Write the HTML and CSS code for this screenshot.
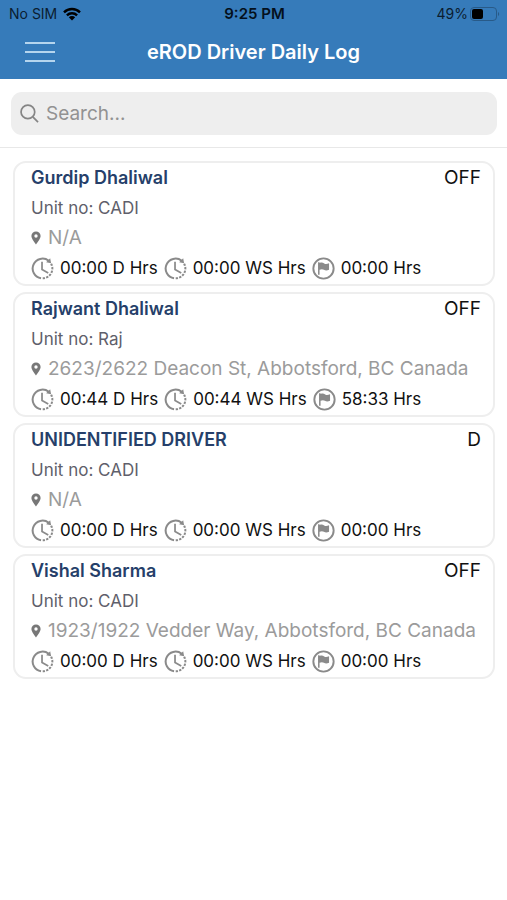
FILE: index.html
```html
<!DOCTYPE html>
<html lang="en">
<head>
<meta charset="utf-8">
<meta name="viewport" content="width=device-width, initial-scale=1">
<title>eROD Driver Daily Log</title>
<link rel="stylesheet" href="styles.css">
</head>
<body>
<svg class="sprite" aria-hidden="true">
  <symbol id="pin" viewBox="0 0 10 14">
    <path fill="currentColor" fill-rule="evenodd" d="M5 .5A4.600 4.600 0 0 0 .4 5.100C.4 8.200 5 13.500 5 13.500S9.600 8.200 9.600 5.100A4.600 4.600 0 0 0 5 .5ZM5 3.300A1.700 1.700 0 1 1 5 6.700A1.700 1.700 0 0 1 5 3.300Z"/>
  </symbol>
  <symbol id="clock" viewBox="0 0 24 24">
    <g fill="none" stroke="currentColor">
      <path stroke-width="2.100" d="M10.500 22.200A10.300 10.300 0 1 1 18.500 4"/>
      <path stroke-width="2.100" stroke-dasharray="2.400 1.300" d="M21 7A10.300 10.300 0 0 1 12 22.300"/>
      <path stroke-width="1.800" d="M11.500 5V13L18 16.800"/>
    </g>
    <path fill="currentColor" d="M20 1.200L21 6.600L15.800 5.600Z"/>
  </symbol>
  <symbol id="flag" viewBox="0 0 24 24">
    <circle cx="12" cy="12" r="10.600" fill="none" stroke="currentColor" stroke-width="2"/>
    <path fill="currentColor" d="M6.300 5.600H7.900V6.300C10 5.400 11.500 5.900 12.700 6.700C14.200 7.500 15.500 7.400 17.800 6.500V13.300C15.500 14.300 13.800 14.100 12.500 13.400C11 12.600 9.800 12.600 7.900 13.400V18.400H6.300Z"/>
  </symbol>
</svg>

<header class="topbar">
  <div class="status">
    <div class="status-left">
      <span>No SIM</span>
      <svg class="wifi" viewBox="0 0 18 14" aria-hidden="true">
        <g fill="none" stroke="currentColor" stroke-width="2.400">
          <path d="M1 5.300A11.500 11.500 0 0 1 17 5.300"/>
          <path d="M3.900 8.300A7.300 7.300 0 0 1 14.100 8.300"/>
        </g>
        <path fill="currentColor" d="M9 13.600L5.800 10.300A4.600 4.600 0 0 1 12.200 10.300Z"/>
      </svg>
    </div>
    <span class="time">9:25 PM</span>
    <div class="status-right">
      <span>49%</span>
      <svg class="battery" viewBox="0 0 30 14" aria-hidden="true">
        <rect x=".5" y=".5" width="26" height="13" rx="3.500" fill="none" stroke="#285a88"/>
        <rect x="2" y="2" width="11" height="10" rx="2" fill="#000"/>
        <path d="M28 5A2.300 2.300 0 0 1 28 9Z" fill="#285a88"/>
      </svg>
    </div>
  </div>
  <div class="navbar">
    <button class="menu" type="button" aria-label="Menu"><span></span><span></span><span></span></button>
    <h1>eROD Driver Daily Log</h1>
  </div>
</header>

<form class="search" role="search">
  <label class="field">
    <svg class="lens" viewBox="0 0 20 20" aria-hidden="true">
      <g fill="none" stroke="currentColor" stroke-width="1.800">
        <circle cx="8.300" cy="8.300" r="7.200"/>
        <path d="M13.500 13.500L19 19"/>
      </g>
    </svg>
    <input type="search" placeholder="Search..." aria-label="Search">
  </label>
</form>

<main class="drivers">
  <article class="card">
    <div class="head"><h2>Gurdip Dhaliwal</h2><span class="duty">OFF</span></div>
    <p class="unit">Unit no: CADI</p>
    <p class="place"><svg class="pin"><use href="#pin"/></svg>N/A</p>
    <ul class="hours">
      <li><svg><use href="#clock"/></svg>00:00 D Hrs</li>
      <li><svg><use href="#clock"/></svg>00:00 WS Hrs</li>
      <li><svg><use href="#flag"/></svg>00:00 Hrs</li>
    </ul>
  </article>
  <article class="card">
    <div class="head"><h2>Rajwant Dhaliwal</h2><span class="duty">OFF</span></div>
    <p class="unit">Unit no: Raj</p>
    <p class="place"><svg class="pin"><use href="#pin"/></svg>2623/2622 Deacon St, Abbotsford, BC Canada</p>
    <ul class="hours">
      <li><svg><use href="#clock"/></svg>00:44 D Hrs</li>
      <li><svg><use href="#clock"/></svg>00:44 WS Hrs</li>
      <li><svg><use href="#flag"/></svg>58:33 Hrs</li>
    </ul>
  </article>
  <article class="card">
    <div class="head"><h2>UNIDENTIFIED DRIVER</h2><span class="duty">D</span></div>
    <p class="unit">Unit no: CADI</p>
    <p class="place"><svg class="pin"><use href="#pin"/></svg>N/A</p>
    <ul class="hours">
      <li><svg><use href="#clock"/></svg>00:00 D Hrs</li>
      <li><svg><use href="#clock"/></svg>00:00 WS Hrs</li>
      <li><svg><use href="#flag"/></svg>00:00 Hrs</li>
    </ul>
  </article>
  <article class="card">
    <div class="head"><h2>Vishal Sharma</h2><span class="duty">OFF</span></div>
    <p class="unit">Unit no: CADI</p>
    <p class="place"><svg class="pin"><use href="#pin"/></svg>1923/1922 Vedder Way, Abbotsford, BC Canada</p>
    <ul class="hours">
      <li><svg><use href="#clock"/></svg>00:00 D Hrs</li>
      <li><svg><use href="#clock"/></svg>00:00 WS Hrs</li>
      <li><svg><use href="#flag"/></svg>00:00 Hrs</li>
    </ul>
  </article>
</main>
</body>
</html>
```
FILE: styles.css
```css
* {
  box-sizing: border-box;
  margin: 0;
  padding: 0;
}

body {
  background: #fff;
  color: #111;
  font-family: Inter, "Liberation Sans", sans-serif;
  font-size: 17px;
}

.sprite {
  display: none;
}

.topbar {
  padding-bottom: 2px;
  background: #367bba;
}

.status {
  display: grid;
  grid-template-columns: 1fr auto 1fr;
  align-items: center;
  height: 27px;
  padding: 0 7px 0 9px;
  color: #0b1d30;
  font-size: 14px;
}

.status-left,
.status-right {
  display: flex;
  align-items: center;
  gap: 6px;
}

.status-right {
  justify-content: flex-end;
  gap: 2px;
}

.wifi {
  width: 18px;
  height: 14px;
  color: #000;
}

.battery {
  width: 30px;
  height: 14px;
}

.time {
  color: #04101c;
  font-size: 15px;
  font-weight: 600;
}

.navbar {
  display: grid;
  grid-template-columns: 30px 1fr 30px;
  align-items: center;
  height: 50px;
  padding: 0 25px;
}

.menu {
  display: flex;
  flex-direction: column;
  gap: 7px;
  border: 0;
  background: none;
}

.menu span {
  height: 2px;
  background: #b5d5ee;
}

h1 {
  color: #fff;
  font-size: 20px;
  font-weight: 600;
  text-align: center;
}

.search {
  padding: 13px 10px 12px 11px;
  border-bottom: 1px solid #e8e8e8;
}

.field {
  display: flex;
  align-items: center;
  gap: 7px;
  height: 43px;
  padding: 0 9px;
  border-radius: 11px;
  background: #eee;
}

.lens {
  width: 19px;
  height: 19px;
  color: #858585;
}

.field input {
  flex: 1;
  min-width: 0;
  border: 0;
  outline: 0;
  background: none;
  color: #333;
  font: inherit;
  font-size: 19px;
}

.field input::placeholder {
  color: #929292;
}

.drivers {
  display: flex;
  flex-direction: column;
  gap: 6px;
  padding: 13px 12px 13px 13px;
}

.card {
  padding: 0 12px 1px 16px;
  border: 2px solid #eee;
  border-radius: 13px;
  line-height: 30px;
}

.head {
  display: flex;
  justify-content: space-between;
}

h2 {
  color: #263f6a;
  font-size: 18px;
  font-weight: 600;
}

.duty {
  font-size: 19px;
}

.unit {
  color: #5f5f6b;
}

.place {
  display: flex;
  align-items: center;
  gap: 7px;
  color: #9b9b9b;
  font-size: 19px;
  white-space: nowrap;
}

.pin {
  width: 10px;
  height: 14px;
  color: #777;
}

.hours {
  display: flex;
  gap: 6px;
  list-style: none;
}

.hours li {
  display: flex;
  align-items: center;
  gap: 6px;
  white-space: nowrap;
}

.hours svg {
  width: 23px;
  height: 23px;
  color: #8a8a8a;
}
```
